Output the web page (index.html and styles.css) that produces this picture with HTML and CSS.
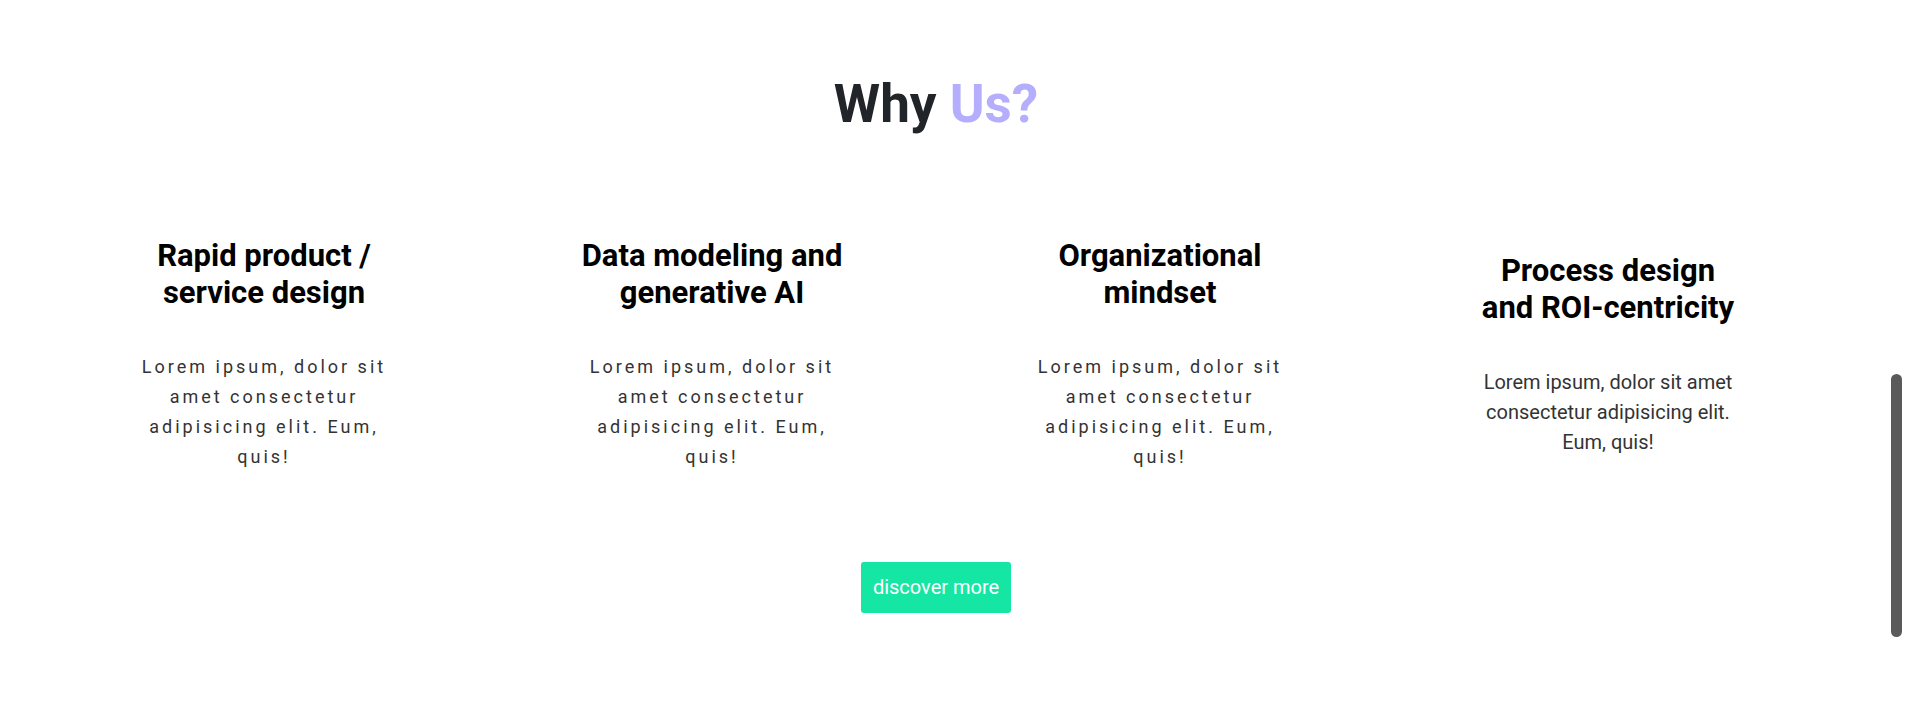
FILE: index.html
```html
<!DOCTYPE html>
<html lang="en">
<head>
<meta charset="utf-8">
<title>Why Us?</title>
<link rel="stylesheet" href="styles.css">
</head>
<body>
<main class="page">
  <section class="why">
    <h1 class="why-title">Why <span class="accent">Us?</span></h1>
    <div class="features">
      <div class="feature">
        <h3 class="feature-title">Rapid product / service design</h3>
        <p class="feature-text">Lorem ipsum, dolor sit amet consectetur adipisicing elit. Eum, quis!</p>
      </div>
      <div class="feature">
        <h3 class="feature-title">Data modeling and generative AI</h3>
        <p class="feature-text">Lorem ipsum, dolor sit amet consectetur adipisicing elit. Eum, quis!</p>
      </div>
      <div class="feature">
        <h3 class="feature-title">Organizational mindset</h3>
        <p class="feature-text">Lorem ipsum, dolor sit amet consectetur adipisicing elit. Eum, quis!</p>
      </div>
      <div class="feature">
        <h3 class="feature-title">Process design and ROI-centricity</h3>
        <p class="feature-text plain">Lorem ipsum, dolor sit amet consectetur adipisicing elit. Eum, quis!</p>
      </div>
    </div>
    <div class="actions">
      <a class="btn-discover" href="#">discover more</a>
    </div>
  </section>
</main>
<div class="scroll-thumb"></div>
</body>
</html>
```

FILE: styles.css
```css
* { box-sizing: border-box; }
html, body { margin: 0; padding: 0; background: #fff; overflow: hidden; }
body {
  font-family: Roboto, "Liberation Sans", Arial, sans-serif;
  color: #212529;
}
.page {
  width: 1872px;
}
.why {
  padding-top: 73px;
  display: flex;
  flex-direction: column;
  align-items: center;
}
.why-title {
  margin: 0;
  font-size: 53px;
  line-height: 1.2;
  font-weight: 700;
  color: #212529;
}
.accent { color: #b5aefd; }
.features {
  margin-top: 100px;
  display: grid;
  grid-template-columns: repeat(4, 448px);
  align-items: center;
}
.feature {
  display: flex;
  flex-direction: column;
  align-items: center;
  text-align: center;
}
.feature-title {
  margin: 0;
  width: 266px;
  font-size: 31px;
  line-height: 37px;
  font-weight: 700;
  color: #000;
}
.feature-text {
  margin: 41px 0 0;
  width: 266px;
  font-size: 18px;
  line-height: 30px;
  letter-spacing: 3px;
  color: #333;
}
.feature-text.plain {
  letter-spacing: 0;
  font-size: 20px;
}
.actions {
  margin-top: 90px;
}
.btn-discover {
  display: inline-block;
  padding: 12px 12px;
  font-size: 20px;
  line-height: 27px;
  color: #fff;
  background: #15e6a4;
  border-radius: 3px;
  text-decoration: none;
}
.scroll-thumb {
  position: fixed;
  right: 3px;
  top: 374px;
  width: 11px;
  height: 263px;
  border-radius: 6px;
  background: #5a5a5a;
}
```
